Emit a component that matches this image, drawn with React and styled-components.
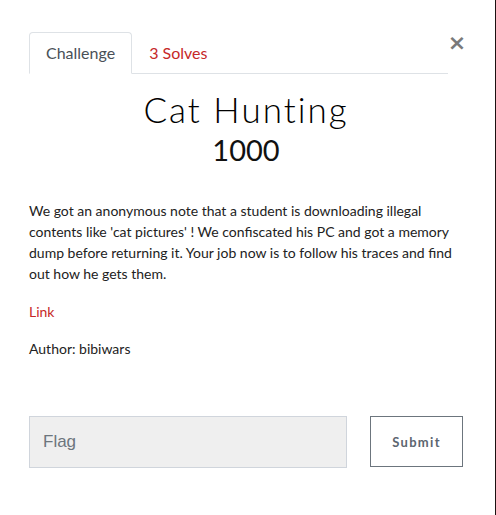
import React from "react";
import styled, { createGlobalStyle } from "styled-components";

const Global = createGlobalStyle`
  html, body {
    margin: 0;
    padding: 0;
    background: #1b1111;
  }
  body {
    font-family: "Lato", "Liberation Sans", sans-serif;
  }
`;

const Modal = styled.div`
  width: 495px;
  min-height: 515px;
  background: #fff;
  box-sizing: border-box;
  padding: 32px 32px 0 29px;
`;

const Header = styled.div`
  display: flex;
  align-items: flex-start;
`;

const Tabs = styled.ul`
  flex: 1;
  display: flex;
  list-style: none;
  margin: 0;
  padding: 0;
  border-bottom: 1px solid #dee2e6;
`;

const Tab = styled.li`
  height: 42px;
  box-sizing: border-box;
  padding: 0 16px 1px;
  margin-bottom: -1px;
  display: flex;
  align-items: center;
  font-size: 16px;
  color: ${(p) => (p.$active ? "#495057" : "#c62828")};
  background: ${(p) => (p.$active ? "#fff" : "transparent")};
  border: 1px solid ${(p) => (p.$active ? "#dee2e6" : "transparent")};
  border-bottom-color: ${(p) => (p.$active ? "#fff" : "transparent")};
  border-radius: 4px 4px 0 0;
`;

const Close = styled.button`
  border: 0;
  background: none;
  padding: 0;
  margin: 0 -9px 0 -6px;
  width: 30px;
  height: 22px;
  font-family: "DejaVu Sans", sans-serif;
  font-size: 22px;
  font-weight: bold;
  line-height: 20px;
  color: #7a7a7a;
  text-align: center;
`;

const Title = styled.h2`
  margin: 13px 0 0;
  text-align: center;
  font-family: "Lato", sans-serif;
  font-weight: 300;
  font-size: 35px;
  letter-spacing: 2px;
  line-height: 44px;
  color: #000;
`;

const Points = styled.h3`
  margin: 1px 0 0;
  text-align: center;
  font-weight: 400;
  font-size: 29px;
  line-height: 36px;
  color: #111;
`;

const Text = styled.p`
  margin: ${(p) => p.$top || 0}px 0 0;
  font-size: 14px;
  line-height: 21px;
  color: #222;
`;

const Link = styled.a`
  color: #c62828;
  text-decoration: none;
`;

const Form = styled.form`
  display: flex;
  gap: 23px;
  margin-top: 57px;
`;

const FlagInput = styled.input`
  flex: 0 0 318px;
  height: 52px;
  box-sizing: border-box;
  background: #efefef;
  border: 1px solid #d0d5dc;
  padding: 0 13px;
  font-family: "Liberation Sans", Arial, sans-serif;
  font-size: 17px;
  color: #333;
  outline: none;
  &::placeholder {
    color: #6c757d;
  }
`;

const Submit = styled.button`
  width: 93px;
  height: 51px;
  box-sizing: border-box;
  background: #fff;
  border: 1px solid #6c757d;
  font-family: "Lato", sans-serif;
  font-weight: bold;
  font-size: 13px;
  letter-spacing: 1.3px;
  color: #5c6670;
`;

export default function App() {
  return (
    <>
      <Global />
      <Modal>
        <Header>
          <Tabs>
            <Tab $active>Challenge</Tab>
            <Tab>3 Solves</Tab>
          </Tabs>
          <Close aria-label="close">×</Close>
        </Header>
        <Title>Cat Hunting</Title>
        <Points>1000</Points>
        <Text $top={32}>
          We got an anonymous note that a student is downloading illegal
          contents like 'cat pictures' ! We confiscated his PC and got a memory
          dump before returning it. Your job now is to follow his traces and
          find out how he gets them.
        </Text>
        <Text $top={17}>
          <Link href="#">Link</Link>
        </Text>
        <Text $top={16}>Author: bibiwars</Text>
        <Form onSubmit={(e) => e.preventDefault()}>
          <FlagInput placeholder="Flag" />
          <Submit type="submit">Submit</Submit>
        </Form>
      </Modal>
    </>
  );
}
